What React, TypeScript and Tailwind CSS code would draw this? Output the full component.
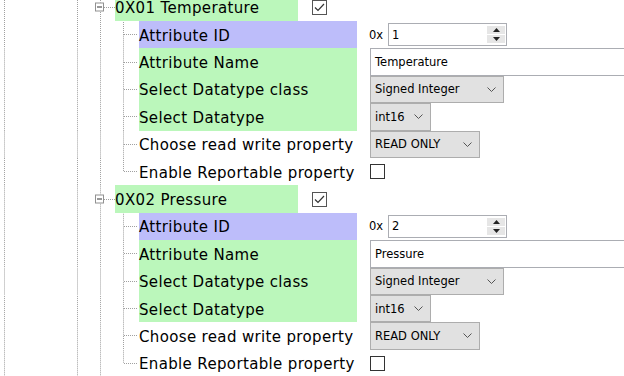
import React from 'react'

// tree guide lines (1px dots, aligned to the viewport so rows stay in phase)
const vdots = 'bg-[linear-gradient(to_bottom,#a0a0a0_50%,transparent_50%)] bg-[length:1px_2px] bg-fixed'
const hdots = 'bg-[linear-gradient(to_right,#a0a0a0_50%,transparent_50%)] bg-[length:2px_1px] bg-fixed'
const rowH = 'h-[27.4px]'

const groups = [
  { code: '0X01', name: 'Temperature', attrId: '1' },
  { code: '0X02', name: 'Pressure', attrId: '2' },
]

function LineCol({ width }: { width: string }) {
  return (
    <div className={`${width} shrink-0 flex`}>
      <div className={`w-px h-full ${vdots}`} />
    </div>
  )
}

function BaseCols() {
  return (
    <>
      <LineCol width="w-[73px]" />
      <LineCol width="w-[23px]" />
    </>
  )
}

function Chevron() {
  return (
    <svg width="9" height="5" viewBox="0 0 9 5" className="shrink-0">
      <polyline points="0.5,0.5 4.5,4.5 8.5,0.5" fill="none" stroke="#555" strokeWidth="1" />
    </svg>
  )
}

function Select({ value, width }: { value: string; width: string }) {
  return (
    <div className={`${width} h-full border border-[#adadad] bg-[#e1e1e1] flex items-center justify-between pl-[4px] pr-[7px] text-black`}>
      <span>{value}</span>
      <Chevron />
    </div>
  )
}

function Checkbox({ checked }: { checked?: boolean }) {
  return (
    <div className={`w-[15px] h-[15px] bg-white border ${checked ? 'border-[#555]' : 'border-[#333]'} flex items-center justify-center`}>
      {checked && (
        <svg width="13" height="13" viewBox="0 0 13 13">
          <polyline points="2,6.5 5,9.5 11,3" fill="none" stroke="#333" strokeWidth="1.2" />
        </svg>
      )}
    </div>
  )
}

function SpinBox({ value }: { value: string }) {
  return (
    <div className="flex items-center h-full -ml-px">
      <span className="w-[19px]">0x</span>
      <div className="w-[119px] h-[23px] border border-[#abadb3] bg-white flex items-center">
        <span className="flex-1 pl-[3px]">{value}</span>
        <div className="w-[18px] h-[17px] mr-px flex flex-col gap-px">
          <div className="flex-1 bg-[#e6e6e6] flex items-center justify-center">
            <svg width="7" height="4" viewBox="0 0 7 4"><polygon points="0,4 3.5,0 7,4" fill="#222" /></svg>
          </div>
          <div className="flex-1 bg-[#e6e6e6] flex items-center justify-center">
            <svg width="7" height="4" viewBox="0 0 7 4"><polygon points="0,0 3.5,4 7,0" fill="#222" /></svg>
          </div>
        </div>
      </div>
    </div>
  )
}

function HeaderRow({ label }: { label: string }) {
  return (
    <div className={`flex ${rowH}`}>
      <BaseCols />
      <div className="relative w-[15px] shrink-0 flex items-center">
        <div className={`w-px h-full ${vdots}`} />
        <div className={`ml-[3px] w-[11px] h-px ${hdots}`} />
        <div className="absolute left-[-5px] top-1/2 -translate-y-1/2 w-[9px] h-[9px] border border-[#919191] bg-white flex items-center justify-center">
          <div className="w-[5px] h-px bg-[#333]" />
        </div>
      </div>
      <div className="w-[183px] shrink-0 bg-[#bbf7bb] flex items-center pt-[2px]">{label}</div>
      <div className="ml-[14px] flex items-center pt-px">
        <Checkbox checked />
      </div>
    </div>
  )
}

function ChildRow({ label, bg, last, children }: { label: string; bg?: string; last?: boolean; children: React.ReactNode }) {
  return (
    <div className={`flex ${rowH}`}>
      <BaseCols />
      <LineCol width="w-[23px]" />
      <div className="w-[16px] shrink-0 flex">
        <div className="w-px flex flex-col">
          <div className={`h-1/2 ${vdots}`} />
          <div className={`flex-1 ${last ? '' : vdots}`} />
        </div>
        <div className="flex-1 flex items-center">
          <div className={`w-[14px] h-px ${hdots}`} />
        </div>
      </div>
      <div className={`w-[218px] shrink-0 flex items-center pt-[2px] ${bg ?? ''}`}>{label}</div>
      <div className="ml-[13px] h-full flex items-center font-['DejaVu_Sans',sans-serif] text-[11.5px] tracking-normal">{children}</div>
    </div>
  )
}

export default function App() {
  return (
    <div className="w-[624px] h-[376px] overflow-hidden bg-white text-black font-['DejaVu_Sans',sans-serif] text-[15px] leading-[16px] tracking-[0.35px]">
      <div className="mt-[-6.4px] pl-[4px]">
        {groups.map((g) => (
          <div key={g.code}>
            <HeaderRow label={`${g.code} ${g.name}`} />
            <ChildRow label="Attribute ID" bg="bg-[#bdbdfa]">
              <SpinBox value={g.attrId} />
            </ChildRow>
            <ChildRow label="Attribute Name" bg="bg-[#bbf7bb]">
              <div className="w-[260px] h-full border border-[#abadb3] bg-white flex items-center pl-[4px]">{g.name}</div>
            </ChildRow>
            <ChildRow label="Select Datatype class" bg="bg-[#bbf7bb]">
              <Select value="Signed Integer" width="w-[134px]" />
            </ChildRow>
            <ChildRow label="Select Datatype" bg="bg-[#bbf7bb]">
              <Select value="int16" width="w-[61px]" />
            </ChildRow>
            <ChildRow label="Choose read write property">
              <Select value="READ ONLY" width="w-[110px]" />
            </ChildRow>
            <ChildRow label="Enable Reportable property" last>
              <Checkbox />
            </ChildRow>
          </div>
        ))}
      </div>
    </div>
  )
}
